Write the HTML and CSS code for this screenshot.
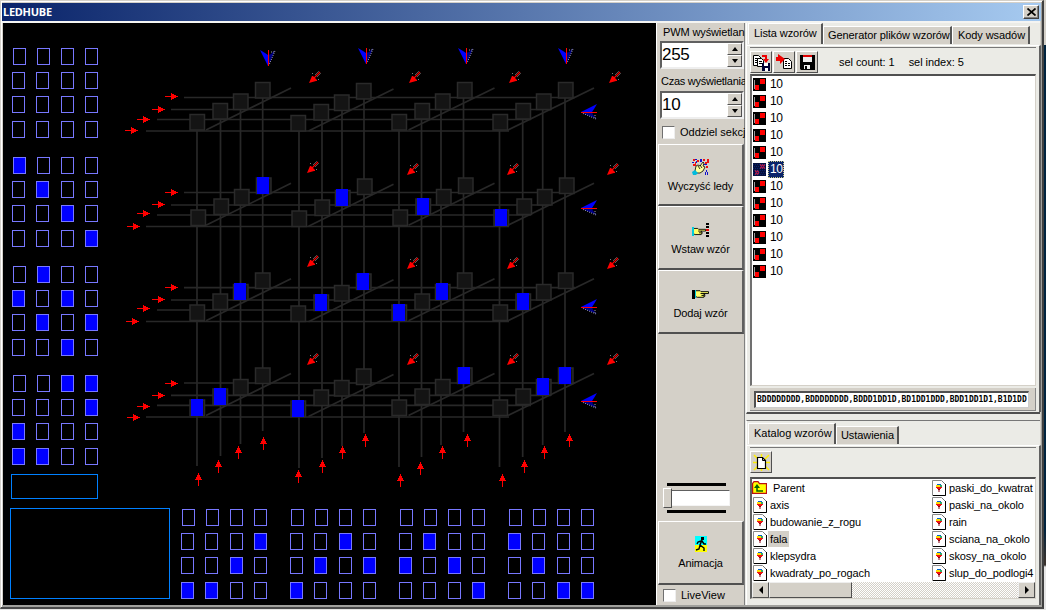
FILE: index.html
```html
<!DOCTYPE html>
<html lang="pl">
<head>
<meta charset="utf-8">
<title>LEDHUBE</title>
<link rel="stylesheet" href="styles.css">
</head>
<body>
<svg class="defs" width="0" height="0">
  <defs>
    <symbol id="pattern" viewBox="0 0 13 13"><path fill="#000" d="M0 0h13v13H0z"/><path fill="#f00" d="M7 1h5v5H7zM2 7h4v5H2z"/><path fill="#999" d="M1 2h1v9H1z"/></symbol>
    <symbol id="pattern-sel" viewBox="0 0 13 13"><path fill="#06103c" d="M0 0h13v13H0z"/><path fill="#a01848" d="M7 1h5v5H7zM2 7h4v5H2z"/><path stroke="#0a246a" stroke-width="1" stroke-dasharray="1 1" d="M0 1.5h13M1 3.5h13M0 5.5h13M1 7.5h13M0 9.5h13M1 11.5h13"/></symbol>
    <symbol id="file" viewBox="0 0 14 16"><path fill="#fff" stroke="#888" d="M.5.5h9l4 4v11H.5z"/><path stroke="#000" fill="none" d="M13.5 4v11.5H1"/><path stroke="#777" fill="none" d="M10 1l3 3"/><path fill="#06c" d="M5 4h4v1H5z"/><path fill="#fd0" d="M4 5h4v2H4z"/><path fill="#3a6" d="M8 5h2v2H8z"/><path fill="#e11" d="M4 7h6v1H4zM5 8h4v1H5z"/><path fill="#801" d="M6 9h2v1H6zM6.500 10h1v2h-1z"/></symbol>
    <symbol id="hand" viewBox="0 0 16 10"><path fill="#ff6" stroke="#000" d="M1.5 1.5h5l1 1h8v2h-5v1h1v2h-1v1h-7l-2-1z"/><path fill="none" stroke="#000" d="M7 4.500h4M8 6.500h3"/></symbol>
  </defs>
</svg>
<div class="desktop">
  <div class="window">
    <header class="titlebar"><span class="caption">LEDHUBE</span>
      <button class="close"><svg width="9" height="8" viewBox="0 0 9 8"><path d="M.5.5l8 7M8.500.5l-8 7" stroke="#000" stroke-width="1.7"/></svg></button>
    </header>
    <div class="client">
      <svg class="cube" id="cube" width="653" height="582" viewBox="3 23 653 582"></svg>

      <aside class="controls">
        <label class="lbl pwm">PWM wyświetlan</label>
        <div class="spin"><span>255</span><div class="arrows"><i class="up"></i><i class="down"></i></div></div>
        <label class="lbl czas">Czas wyświetlania</label>
        <div class="spin"><span>10</span><div class="arrows"><i class="up"></i><i class="down"></i></div></div>
        <div class="check"><i></i><span>Oddziel sekcj</span></div>
        <button class="big">
          <svg width="18" height="16" viewBox="0 0 18 16"><path fill="#e11" d="M1 0h2v2H1zM5 1h2v2H5zM11 0h2v2h-2zM15 0h2v4h-2zM13 3h2v2h-2zM1 5h3v2H1zM14 7h2v2h-2zM3 3h1v2H3z"/><path fill="#11c" d="M3 0h2v1H3zM0 3h2v1H0zM8 0h2v3H8zM12 5h3v1h-3zM14 11h1v2h-1zM13 13h1v3h-1zM15 13h1v3h-1zM4 2h1v2H4z"/><path fill="#ff9" stroke="#000" stroke-width=".8" d="M3 12L4 7l2-1 2 1 3-4 1 1-1 3 2 1-2 4-3 2H5z"/><path fill="none" stroke="#000" stroke-width=".8" d="M6 7l2 3M8 6l2 3"/><path fill="#0bd" d="M0 13l3-2 3 3-2 2H1z"/></svg>
          <span>Wyczyść ledy</span></button>
        <button class="big second">
          <svg width="17" height="15" viewBox="0 0 17 15"><use href="#hand" x="0" y="4" width="14" height="9"/><path fill="#0cd" d="M0 4h2v9H0z"/><path d="M14 0h3v2h-3zM14 3h3v2h-3zM14 9h3v2h-3zM14 12h3v2h-3z"/><path fill="#e00" d="M14 6h3v2h-3z"/></svg>
          <span>Wstaw wzór</span></button>
        <button class="big third">
          <svg width="17" height="11" viewBox="0 0 17 11"><use href="#hand" x="2" y="0" width="15" height="10"/><path d="M0 1h3v9H0z"/><path fill="#0cd" d="M3 1h1v8H3z"/></svg>
          <span>Dodaj wzór</span></button>
        <div class="slider"><b></b><div class="track"><i></i></div><b></b></div>
        <button class="big anim">
          <svg width="12" height="16" viewBox="0 0 12 16"><path fill="#0ff" d="M0 0h12v9H0z"/><path fill="#ff0" d="M0 9h12v7H0z"/><path d="M6 1h3v3H6z"/><path fill="none" stroke="#000" stroke-width="1.4" d="M7 4L5 9l4 3v3M5 9l-1 4-3 1M6 5L3 6 2 8M7 5l2 3 2 0"/></svg>
          <span>Animacja</span></button>
        <div class="check live"><i></i><span>LiveView</span></div>
      </aside>

      <main class="side">
        <section class="pane top">
          <nav class="tabs"><span class="tab on t1">Lista wzorów</span><span class="tab t2">Generator plików wzorów</span><span class="tab t3">Kody wsadów</span></nav>
          <div class="page">
            <div class="tools">
              <button class="tool"><svg width="17" height="17" viewBox="0 0 17 17"><path fill="#fff" stroke="#000" d="M.5 1.500h5l3 3v7h-8z"/><path stroke="#000" d="M2 4.500h3M2 6.500h5M2 8.500h5"/><path fill="#fff" stroke="#000" d="M4.500 4.500h4l2 2v6h-6z"/><path stroke="#000" d="M6 7.500h3M6 9.500h3"/><path fill="none" stroke="#e00" stroke-width="2" d="M9 2h4v4"/><path fill="#e00" d="M10 5h6l-3 4z"/><path fill="#003" d="M9 9h8v8H9z"/><path fill="#fff" d="M11 9h4v3h-4zM12 14h3v3h-3z"/></svg></button>
              <button class="tool"><svg width="17" height="16" viewBox="0 0 17 16"><path fill="#fff" stroke="#000" d="M7.500 4.500h5l3 3v7h-8z"/><path stroke="#000" stroke-dasharray="2 1" d="M9 7.500h3M9 9.500h5M9 11.500h5"/><path fill="#e00" d="M2 0l7 5-5 5V7H0V3h2z"/></svg></button>
              <button class="tool"><svg width="15" height="15" viewBox="0 0 15 15"><path d="M0 0h15v15H1l-1-1z"/><path fill="#eee" d="M3 1h9v6H3zM4 10h6v4H4z"/><path fill="#d00" d="M3 0h9v2H3z"/><path fill="#000" d="M5 11h2v3H5z"/></svg></button>
              <span class="count">sel count: 1</span><span class="index">sel index: 5</span>
            </div>
            <ul class="list" id="patterns"></ul>
            <div class="codebar"><div class="code">BDDDDDDDD,BDDDDDDDD,BDDD1DD1D,BD1DD1DDD,BDD1DD1D1,B1D1DD</div></div>
          </div>
        </section>
        <section class="pane bottom">
          <nav class="tabs"><span class="tab on b1">Katalog wzorów</span><span class="tab b2">Ustawienia</span></nav>
          <div class="page">
            <div class="tools">
              <button class="tool"><svg width="17" height="17" viewBox="0 0 17 17"><path stroke="#fe0" stroke-width="1.500" d="M1 1l15 15M16 1L1 16M0 8.500h17M8.500 0v17"/><path fill="#fff" stroke="#000" stroke-width="1.200" d="M4.500 3.500h5l3 3v8h-8z"/><path fill="none" stroke="#000" d="M9.500 3.500v3h3"/></svg></button>
            </div>
            <div class="catalog">
              <div class="cols">
                <ul class="files left">
                  <li class="parent"><svg width="15" height="13" viewBox="0 0 15 13"><path fill="#ff0" stroke="#b11" stroke-width="1.200" d="M.6 12.400V2.500L2 .6h4l1.500 2h7v9.800z"/><path fill="none" stroke="#060" stroke-width="1.500" d="M5 6v4h6"/><path fill="#060" d="M2 7l3-4 3 4z"/></svg><span>Parent</span></li>
                  <li><svg width="14" height="16"><use href="#file"/></svg><span>axis</span></li>
                  <li><svg width="14" height="16"><use href="#file"/></svg><span>budowanie_z_rogu</span></li>
                  <li><svg width="14" height="16"><use href="#file"/></svg><span class="picked">fala</span></li>
                  <li><svg width="14" height="16"><use href="#file"/></svg><span>klepsydra</span></li>
                  <li><svg width="14" height="16"><use href="#file"/></svg><span>kwadraty_po_rogach</span></li>
                </ul>
                <ul class="files">
                  <li><svg width="14" height="16"><use href="#file"/></svg><span>paski_do_kwatrat</span></li>
                  <li><svg width="14" height="16"><use href="#file"/></svg><span>paski_na_okolo</span></li>
                  <li><svg width="14" height="16"><use href="#file"/></svg><span>rain</span></li>
                  <li><svg width="14" height="16"><use href="#file"/></svg><span>sciana_na_okolo</span></li>
                  <li><svg width="14" height="16"><use href="#file"/></svg><span>skosy_na_okolo</span></li>
                  <li><svg width="14" height="16"><use href="#file"/></svg><span>slup_do_podlogi4</span></li>
                </ul>
              </div>
              <div class="scroll"><i class="sb l"></i><i class="thumb"></i><i class="space"></i><i class="sb r"></i></div>
            </div>
          </div>
        </section>
      </main>
    </div>
  </div>
  <div class="behind"></div>
</div>
<script src="script.js"></script>
</body>
</html>
```
FILE: styles.css
```css
* { box-sizing: border-box; }
body { margin: 0; width: 1046px; height: 610px; overflow: hidden; font: 11px/13px "Liberation Sans", Arial, sans-serif; letter-spacing: -.08px; color: #000; background: #ece9e4; }
button { font: inherit; letter-spacing: inherit; padding: 0; margin: 0; border: 0; color: inherit; border-radius: 0; }
ul { list-style: none; margin: 0; padding: 0; }
svg { display: block; flex: none; }
.defs { display: none; }
.desktop { display: flex; height: 610px; border-bottom: 1px solid #e4e4e2; }
.window { width: 1044px; height: 609px; display: flex; flex-direction: column; background: #d4d0c8; border: solid; border-width: 1px 2px 2px 1px; border-color: #d4d0c8 #404040 #484848 #d4d0c8; box-shadow: inset 1px 1px #fff, inset -1px -2px #a0a09c; padding: 2px 2px 2px 1px; }
.behind { flex: 1; background: linear-gradient(#d4d0c8 0 45px, #00243f 45px 530px, #38322e 560px 565px, #e6e6e6 567px); }
.titlebar { height: 18px; display: flex; align-items: center; justify-content: space-between; background: linear-gradient(90deg, #0a246a, #a6caf0); padding: 0 2px 0 1px; width: 1039px; flex: none; }
.caption { color: #fff; font: bold 11px/16px "Noto Sans", sans-serif; letter-spacing: -.25px; }
.close { width: 16px; height: 14px; background: #d4d0c8; border: 1px solid; border-color: #fff #404040 #404040 #fff; box-shadow: inset -1px -1px #808080; display: flex; align-items: center; justify-content: center; }
.client { height: 584px; border-top: 2px solid #f4f4f2; display: flex; min-height: 0; padding-left: 1px; width: 1038px; }
.cube { background: #000; width: 653px; height: 582px; }
.controls { width: 89px; border-left: 1px solid #fff; border-right: 1px solid #808080; height: 582px; display: flex; flex-direction: column; align-items: flex-start; flex: none; padding-left: 1px; background: #d4d0c8; white-space: nowrap; }
.lbl { height: 18px; line-height: 18px; padding-left: 5px; flex: none; letter-spacing: -.12px; }
.czas { height: 22px; line-height: 25px; padding-left: 3px; letter-spacing: -.25px; }
.spin { width: 84px; height: 28px; margin-left: 2px; background: #fff; border: 2px solid; border-color: #606060 #eee #eee #606060; display: flex; justify-content: space-between; flex: none; font: 17px/23px "Liberation Sans", sans-serif; }
.spin span { letter-spacing: -.3px; }
.arrows { width: 15px; display: flex; flex-direction: column; }
.arrows i { flex: 1; background: #d4d0c8; border: 1px solid; border-color: #fff #505050 #505050 #fff; display: flex; align-items: center; justify-content: center; }
.arrows i::after { content: ""; border: 3.5px solid transparent; border-top: 0; border-bottom: 4px solid #000; }
.arrows i.down::after { border-bottom: 0; border-top: 4px solid #000; }
.check { display: flex; align-items: center; height: 24px; margin: 1px 0 0 4px; gap: 5px; flex: none; letter-spacing: 0; }
.check i { width: 13px; height: 13px; background: #fff; border: 1px solid; border-color: #707070 #eee #eee #707070; }
.big { width: 86px; height: 62px; background: #d4d0c8; border: solid; border-width: 1px 2px 2px 1px; border-color: #fff #606060 #505050 #fff; display: flex; flex-direction: column; align-items: center; justify-content: flex-end; padding-bottom: 11px; gap: 5px; flex: none; }
.second, .third { height: 64px; padding-bottom: 12px; }
.third { gap: 7px; }
.big.anim { height: 64px; margin-top: 8px; padding-bottom: 13px; gap: 5px; }
.slider { margin: 149px 0 0 5px; width: 67px; display: flex; flex-direction: column; height: 30px; justify-content: space-between; flex: none; }
.slider b { height: 3px; margin: 0 4px 0 4px; background: #000; }
.track { height: 16px; margin-left: 8px; background: #fff; border: 1px solid; border-color: #606060 #f4f4f4 #f4f4f4 #606060; }
.track i { display: block; position: relative; left: -9px; top: -3px; width: 9px; height: 20px; background: #d4d0c8; border: 1px solid; border-color: #fff #505050 #505050 #fff; }
.live { margin: 0 0 0 5px; height: 20px; }
.side { flex: 1; background: #ebebe6; padding-left: 1px; min-width: 0; display: flex; flex-direction: column; white-space: nowrap; }
.pane { display: flex; flex-direction: column; border-left: 1px solid #fff; }
.top { height: 391px; border-bottom: 2px solid #505050; }
.bottom { flex: 1; margin-top: 6px; border-top: 1px solid #777; padding-top: 2px; }
.tabs { height: 21px; display: flex; align-items: flex-end; padding-left: 1px; flex: none; }
.tab { flex: none; height: 18px; line-height: 17px; background: #d4d0c8; border: solid; border-width: 1px 2px 0 1px; border-color: #fff #555 #fff #fff; padding-left: 4px; }
.tab.on { height: 21px; line-height: 19px; padding-left: 5px; background: #dedbd4; }
.t1 { width: 75px; } .t2 { width: 129px; } .t3 { width: 78px; padding-left: 5px; }
.b1 { width: 88px; letter-spacing: 0; } .b2 { width: 63px; }
.page { flex: 1; margin-top: 1px; border-top: 1px solid #fff; border-right: 2px solid #606060; padding: 0 3px 0 3px; min-height: 0; margin-right: -1px; }
.tools { height: 28px; border-top: 1px solid #777; margin-top: 1px; padding-top: 3px; display: flex; gap: 1px; }
.tool { width: 22px; height: 22px; background: #d4d0c8; border: 1px solid; border-color: #fff #505050 #505050 #fff; display: flex; align-items: center; justify-content: center; }
.count { margin: 5px 0 0 20px; } .index { margin: 5px 0 0 13px; } .count, .index { letter-spacing: -.05px; }
.list { height: 312px; background: #fff; border: 1px solid #d4d0c8; border-top: 2px solid #505050; border-left: 2px solid #707070; margin-top: -1px; }
.list li { height: 17px; display: flex; align-items: center; gap: 2px; padding-left: 1px; }
.list span { padding: 1px 1px 2px 2px; height: 17px; line-height: 15px; font-size: 12px; letter-spacing: -.3px; }
.list .sel { background: #0a246a; color: #fff; outline: 1px dotted #cc8; outline-offset: -1px; }
.codebar { margin-top: 2px; height: 23px; background: #d4d0c8; border-bottom: 1px solid #888; border-right: 1px solid #888; padding: 3px 6px 0 4px; }
.code { height: 17px; background: #fff; border: 1px solid; border-width: 2px 1px 1px 2px; border-color: #505050 #ccc #ccc #505050; overflow: hidden; font: bold 8px/13px "DejaVu Sans Mono", monospace; letter-spacing: 0; padding-left: 1px; }
.bottom .tools { height: 31px; }
.catalog { height: 122px; background: #fff; border: 1px solid #d4d0c8; border-top: 2px solid #505050; border-left: 2px solid #606060; margin-top: -1px; overflow: hidden; }
.cols { display: flex; height: 103px; }
.files.left { width: 179px; flex: none; }
.files li { height: 17px; display: flex; align-items: center; gap: 1px; padding-left: 1px; }
.files li.parent { padding-left: 0; gap: 4px; }
.files span { padding: 0 2px; line-height: 16px; letter-spacing: -.12px; }
.files .picked { background: #d4d0c8; }
.scroll { display: flex; height: 16px; }
.sb { width: 17px; background: #d4d0c8; border: 1px solid; border-color: #eee #505050 #505050 #eee; display: flex; align-items: center; justify-content: center; }
.sb::after { content: ""; border: 4px solid transparent; border-right: 4px solid #000; border-left: 0; }
.sb.r::after { border-left: 4px solid #000; border-right: 0; }
.thumb { width: 83px; background: #d4d0c8; border: 1px solid; border-color: #eee #505050 #505050 #eee; }
.space { flex: 1; background: repeating-conic-gradient(#d4d0c8 0 25%, #fff 0 50%) 0 0 / 2px 2px; }
```
FILE: script.js
```js
const cube = document.getElementById('cube');
const out = [];
const rect = (x, y, w, h, attrs) => out.push(`<rect x="${x}" y="${y}" width="${w}" height="${h}" ${attrs}/>`);
const path = (d, attrs) => out.push(`<path d="${d}" ${attrs}/>`);

/* flat LED matrices: '1' is a lit LED, each string is a 4x4 layer */
function matrix(x0, y0, bits) {
  [...bits].forEach((bit, i) => {
    const c = i % 4, r = Math.floor(i / 4);
    const x = x0 + [0, 24, 49, 73][c] + (r === 0 && c < 2 ? 1 : 0);
    const y = y0 + [0, 24, 48, 73][r];
    rect(x + .5, y + .5, 12, 16, `stroke="#7878ff" fill="${bit === '1' ? '#00f' : '#000'}"`);
  });
}
matrix(12, 48, '0000000000000000');
matrix(12, 157, '1000010000100001');
matrix(12, 266, '0100101001010010');
matrix(12, 375, '0011000110001100');
matrix(181, 509, '0000000100101100');
matrix(290, 509, '0000001001011000');
matrix(399, 509, '0000010010100001');
matrix(508, 509, '0000100001000011');
rect(11.5, 474.5, 86, 24, 'stroke="#0080ff" fill="none"');
rect(10.5, 508.5, 159, 90, 'stroke="#0080ff" fill="none"');

/* wires */
const wire = 'stroke="#282828" stroke-width="1.7" fill="none"';
[[97.5, 109.5, 119.5, 131], [192.5, 205, 215, 226.5], [287.7, 300, 310, 321.5], [383, 395.3, 405.3, 417]].forEach(ys =>
  ys.forEach((y, i) => path(`M${[184, 171, 157, 146][i]} ${y}H${[575, 551, 531, 509][i]}`, wire)));
[[197, 220.5, 240.5, 262.7], [299, 322, 342, 364], [399, 421.5, 441, 463.5], [499.5, 522.7, 542.7, 565]].forEach((xs, g) =>
  xs.forEach((x, i) => path(`M${x} ${[131, 119, 110, 98][i]}V${[466, 456, 444, 431][i] + [0, 2, 1, 1][g]}`, wire)));
[0, 95.3, 190.7, 285.5].forEach(dy => [206, 308.5, 408.5, 508].forEach((x, g) =>
  path(`M${x} ${130 + dy + (g === 1)}L${[291, 393.5, 494.500, 594][g]} ${88 + dy + (g === 1)}`, wire)));

/* cube nodes */
const nodes = [
  [0, 0, '0000000000000000'], [1, 95.5, '0001001001001000'], [0, 190.5, '0010010110100100'], [0, 285.5, '1100100000010011']
];
nodes.forEach(([dx, dy, bits]) => [...bits].forEach((bit, i) => {
  const g = Math.floor(i / 4), c = i % 4;
  const x = [189, 290, 391, 492][g] + [0, 23, 43.500, 65.500][c] + dx;
  const y = [113.5, 102.5, 93, 81.5][c] + dy + (g === 1 ? 1 : 0);
  rect(x + 1, y + 1, 14.500, 15.500, 'fill="#141414" stroke="#2a2a2a" stroke-width="1.500"');
  if (bit === '1') rect(Math.floor(x + 2), Math.floor(y), 12, 17, 'fill="#00f"');
}));

/* red row arrows */
[[96, 109, 119, 130], [192, 204, 213, 226], [287, 299, 308, 321], [383, 395, 406, 417]].forEach((ys, l) =>
  ys.forEach((y, i) => {
    const x = [165, 152, 137, [125, 127, 126, 127][l]][i];
    path(`M${x} ${y}h6v-3h1v1h2v1h2v1h2v1h-2v1h-2v1h-2v1h-1v-3h-6z`, 'fill="red"');
  }));
/* red column arrows */
[[198, 473], [218, 460], [238, 446], [263, 437], [298, 470], [322, 460], [342, 446], [365, 434],
 [400, 474], [420, 462], [442, 446], [467, 434], [502, 474], [524, 460], [544, 446], [569, 434]].forEach(([x, y]) =>
  path(`M${x} ${y}h1v2h1v2h1v2h1v1h-3v6h-1v-6h-3v-1h1v-2h1v-2h1z`, 'fill="red"'));
/* red darts */
[[71, 71], [161, 163], [255, 257], [353, 353]].forEach(([first, rest], l) =>
  [309, 409, 509, 609].forEach((x0, g) => {
    const x = x0 - (l ? 2 : 0), y = g ? rest : first;
    path(`M${x} ${y + 12}l3 -7h1l4 4v1h-1z`, 'fill="red"');
    path(`M${x + 5} ${y + 7}l6 -6`, 'stroke="red" stroke-width="1.100"');
    path(`M${x + 6} ${y + 4}l4 -4M${x + 8} ${y + 6}l4 -4M${x + 3} ${y + 2.500}h1M${x + 9} ${y + 8.500}h1`, 'stroke="#999" stroke-dasharray="1 .6" stroke-width=".8"');
  }));
/* blue markers */
const marker = `<path fill="#00f" d="M-8 -8l4 3 4 1V8z"/><path fill="#000088" d="M0 -3l3 -1 4 -4L1 7H0z"/><path stroke="#99a" stroke-dasharray="1 1.200" d="M7 -7L1 7M3 -6h4"/><path stroke="red" d="M.5 -8V8"/>`;
/* wings sit on the outer edges, pointing at the shaft's end */
const wings = marker.replace('M-8 -8l4 3 4 1V8z', 'M-8 -8l5 3 3 2V8z');
[[268, 58], [366, 56], [466, 56], [566, 56]].forEach(([x, y]) => out.push(`<g transform="translate(${x} ${y})">${wings}</g>`));
[112, 208, 307, 401].forEach(y => out.push(`<g transform="matrix(0 1 -1 0 589 ${y})">${wings}</g>`));
cube.innerHTML = out.join('');

/* pattern list */
document.getElementById('patterns').innerHTML = Array.from({ length: 12 }, (_, i) =>
  `<li><svg width="13" height="13"><use href="#pattern${i === 5 ? '-sel' : ''}"/></svg><span class="${i === 5 ? 'sel' : ''}">10</span></li>`).join('');
```
